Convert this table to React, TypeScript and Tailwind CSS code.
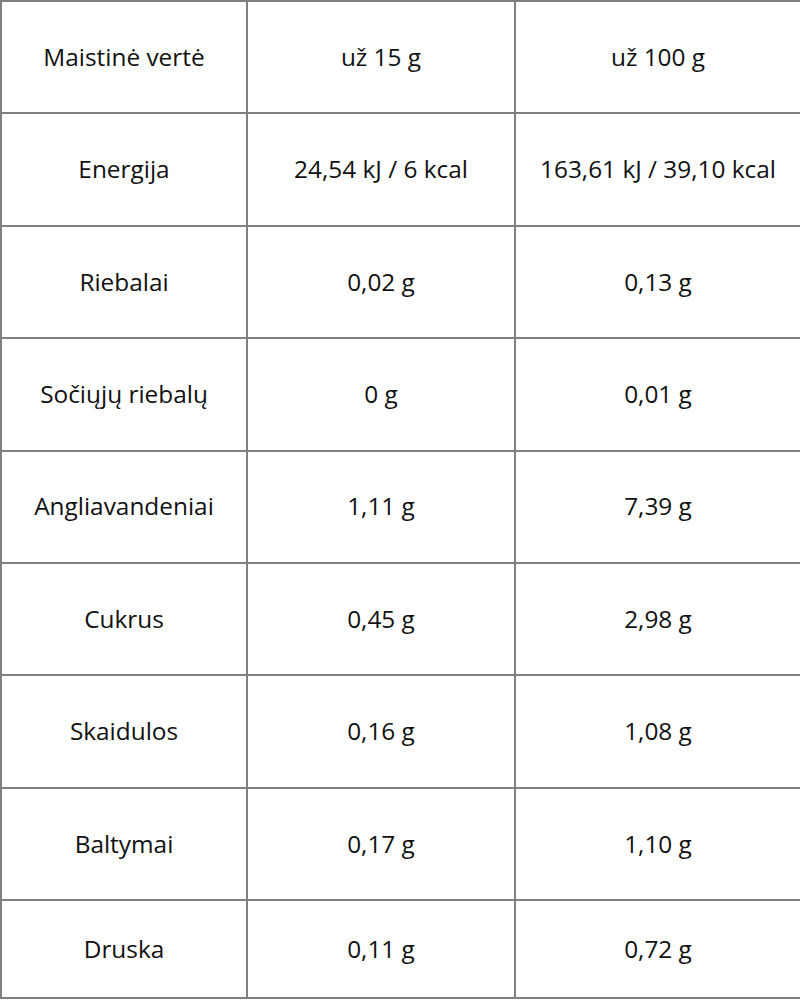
import React from "react";

const rows: [string, string, string][] = [
  ["Maistinė vertė", "už 15 g", "už 100 g"],
  ["Energija", "24,54 kJ / 6 kcal", "163,61 kJ / 39,10 kcal"],
  ["Riebalai", "0,02 g", "0,13 g"],
  ["Sočiųjų riebalų", "0 g", "0,01 g"],
  ["Angliavandeniai", "1,11 g", "7,39 g"],
  ["Cukrus", "0,45 g", "2,98 g"],
  ["Skaidulos", "0,16 g", "1,08 g"],
  ["Baltymai", "0,17 g", "1,10 g"],
  ["Druska", "0,11 g", "0,72 g"],
];

export default function App() {
  return (
    <div className="w-[800px] h-[1000px] bg-white" style={{ fontFamily: '"Open Sans", sans-serif' }}>
      <table className="w-[800px] border-collapse table-fixed text-[24.4px] text-[#111]">
        <colgroup>
          <col className="w-[246px]" />
          <col className="w-[268px]" />
          <col className="w-[286px]" />
        </colgroup>
        <tbody>
          {rows.map((r, i) => (
            <tr key={i} className={i === 8 ? "h-[98px]" : "h-[112.4px]"}>
              {r.map((c, j) => (
                <td key={j} className="border-2 border-[#7f7f7f] text-center align-middle p-0 whitespace-nowrap">
                  {c}
                </td>
              ))}
            </tr>
          ))}
        </tbody>
      </table>
    </div>
  );
}
